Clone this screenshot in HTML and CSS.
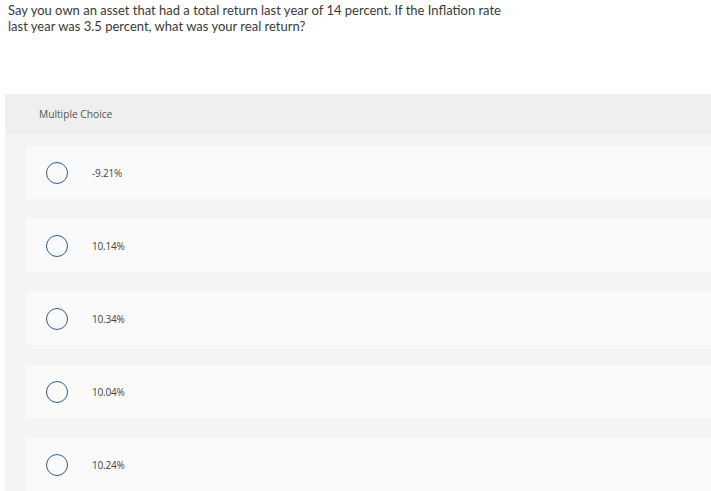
FILE: index.html
```html
<!DOCTYPE html>
<html lang="en">
<head>
<meta charset="utf-8">
<title>Multiple Choice</title>
<link rel="stylesheet" href="styles.css">
</head>
<body>
<div class="page">
  <p class="question">Say you own an asset that had a total return last year of 14 percent. If the Inflation rate<br>last year was 3.5 percent, what was your real return?</p>
  <section class="panel">
    <div class="panel-head">Multiple Choice</div>
    <div class="options">
      <label class="option"><span class="radio"></span><span class="opt-text">-9.21%</span></label>
      <label class="option"><span class="radio"></span><span class="opt-text">10.14%</span></label>
      <label class="option"><span class="radio"></span><span class="opt-text">10.34%</span></label>
      <label class="option"><span class="radio"></span><span class="opt-text">10.04%</span></label>
      <label class="option"><span class="radio"></span><span class="opt-text">10.24%</span></label>
    </div>
  </section>
</div>
</body>
</html>
```
FILE: styles.css
```css
html, body {
  margin: 0;
  padding: 0;
  background: #ffffff;
  overflow: hidden;
}
.page {
  padding: 2px 0 0 0;
  font-family: Lato, "Open Sans", sans-serif;
  color: #333333;
}
.question {
  margin: 0 0 0 8px;
  font-size: 13px;
  line-height: 16px;
  color: #3a3a3a;
}
.panel {
  margin: 60px 0 0 5px;
  background: #f4f4f4;
}
.panel-head {
  height: 40px;
  display: flex;
  align-items: center;
  padding-left: 34px;
  background: #efefef;
  font-family: "Open Sans", sans-serif;
  font-size: 10.2px;
  color: #555555;
}
.options {
  display: flex;
  flex-direction: column;
  gap: 20px;
  padding: 12px 0 0 21px;
}
.option {
  height: 53px;
  display: flex;
  align-items: center;
  padding-left: 20px;
  background: #fafafa;
}
.radio {
  width: 20px;
  height: 20px;
  border: 1.5px solid #2c5f93;
  border-radius: 50%;
  flex: none;
}
.opt-text {
  margin-left: 24px;
  font-family: "Open Sans", sans-serif;
  font-size: 10px;
  letter-spacing: -0.2px;
  color: #444444;
}
```
